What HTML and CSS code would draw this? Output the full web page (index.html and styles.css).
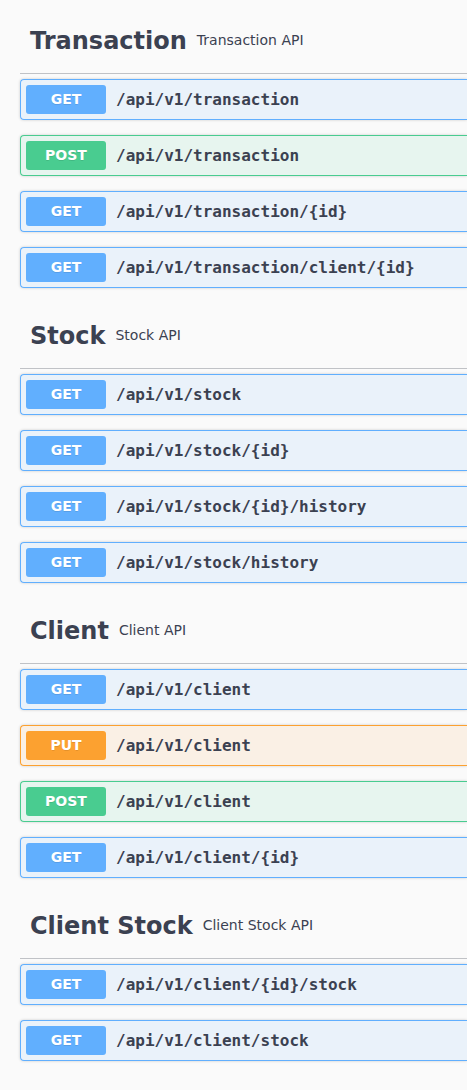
FILE: index.html
```html
<!DOCTYPE html>
<html>
<head>
<meta charset="utf-8">
<link rel="stylesheet" href="styles.css">
</head>
<body>
<main class="ops">
  <section class="tag-section">
    <h3 class="tag"><span class="tag-name">Transaction</span><small class="tag-desc">Transaction API</small></h3>
    <div class="op get"><span class="method">GET</span><span class="path">/api/v1/transaction</span></div>
    <div class="op post"><span class="method">POST</span><span class="path">/api/v1/transaction</span></div>
    <div class="op get"><span class="method">GET</span><span class="path">/api/v1/transaction/{id}</span></div>
    <div class="op get"><span class="method">GET</span><span class="path">/api/v1/transaction/client/{id}</span></div>
  </section>
  <section class="tag-section">
    <h3 class="tag"><span class="tag-name">Stock</span><small class="tag-desc">Stock API</small></h3>
    <div class="op get"><span class="method">GET</span><span class="path">/api/v1/stock</span></div>
    <div class="op get"><span class="method">GET</span><span class="path">/api/v1/stock/{id}</span></div>
    <div class="op get"><span class="method">GET</span><span class="path">/api/v1/stock/{id}/history</span></div>
    <div class="op get"><span class="method">GET</span><span class="path">/api/v1/stock/history</span></div>
  </section>
  <section class="tag-section">
    <h3 class="tag"><span class="tag-name">Client</span><small class="tag-desc">Client API</small></h3>
    <div class="op get"><span class="method">GET</span><span class="path">/api/v1/client</span></div>
    <div class="op put"><span class="method">PUT</span><span class="path">/api/v1/client</span></div>
    <div class="op post"><span class="method">POST</span><span class="path">/api/v1/client</span></div>
    <div class="op get"><span class="method">GET</span><span class="path">/api/v1/client/{id}</span></div>
  </section>
  <section class="tag-section">
    <h3 class="tag"><span class="tag-name">Client Stock</span><small class="tag-desc">Client Stock API</small></h3>
    <div class="op get"><span class="method">GET</span><span class="path">/api/v1/client/{id}/stock</span></div>
    <div class="op get"><span class="method">GET</span><span class="path">/api/v1/client/stock</span></div>
  </section>
</main>
</body>
</html>
```

FILE: styles.css
```css
html, body {
  margin: 0;
  padding: 0;
  background: #fafafa;
  overflow: hidden;
}
body {
  padding-top: 8px;
  font-family: "DejaVu Sans", sans-serif;
  color: #3b4151;
}
.ops {
  margin-left: 20px;
}
.tag {
  display: flex;
  align-items: center;
  box-sizing: border-box;
  min-height: 66px;
  margin: 0 0 5px;
  padding: 10px 0 10px 10px;
  border-bottom: 1px solid rgba(59, 65, 81, 0.3);
  font-size: 24px;
  font-weight: bold;
  color: #3b4151;
}
.tag-desc {
  font-size: 14px;
  font-weight: normal;
  padding: 0 10px;
  margin-bottom: 2px;
  flex: 1;
}
.op {
  display: flex;
  align-items: center;
  margin: 0 0 15px;
  padding: 5px;
  border: 1px solid #61affe;
  border-right-width: 0;
  border-radius: 4px 0 0 4px;
  box-shadow: 0 0 3px rgba(0, 0, 0, 0.19);
  background: rgba(97, 175, 254, 0.1);
}
.method {
  min-width: 80px;
  padding: 6px 0;
  line-height: 17px;
  text-align: center;
  border-radius: 3px;
  font-size: 14px;
  font-weight: bold;
  color: #fff;
  text-shadow: 0 1px 0 rgba(0, 0, 0, 0.1);
  background: #61affe;
}
.path {
  padding: 0 10px;
  font-family: "DejaVu Sans Mono", monospace;
  font-size: 16px;
  font-weight: bold;
  color: #3b4151;
  white-space: nowrap;
}
.op.post {
  border-color: #49cc90;
  background: rgba(73, 204, 144, 0.1);
}
.op.post .method { background: #49cc90; }
.op.put {
  border-color: #fca130;
  background: rgba(252, 161, 48, 0.1);
}
.op.put .method { background: #fca130; }
```
